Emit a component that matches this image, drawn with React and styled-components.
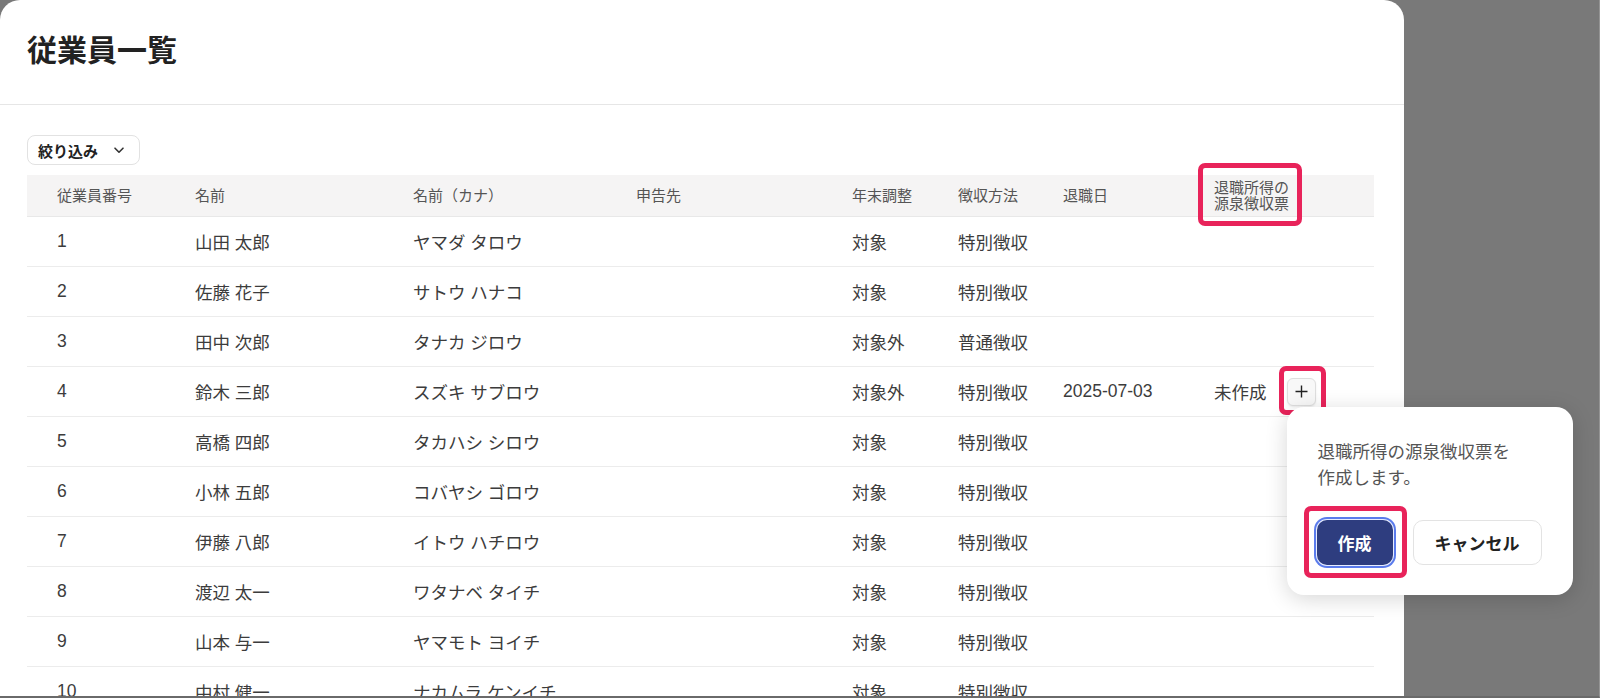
import React from "react";
import styled, { createGlobalStyle } from "styled-components";

const GlobalStyle = createGlobalStyle`
  html, body { margin: 0; padding: 0; }
  body {
    background: #797979;
    font-family: "Liberation Sans", "Noto Sans CJK JP", sans-serif;
    color: #3c3c3c;
    overflow: hidden;
  }
  * { box-sizing: border-box; }
`;

const Screen = styled.div`
  width: 1600px;
  height: 698px;
  overflow: hidden;
  background: #797979;
  border-right: 1px solid #949494;
  border-bottom: 2px solid #6a6a6a;
`;

const Panel = styled.main`
  width: 1404px;
  min-height: 696px;
  background: #fff;
  border-radius: 20px 20px 0 0;
  display: flex;
  flex-direction: column;
`;

const TitleBar = styled.header`
  height: 105px;
  flex-shrink: 0;
  border-bottom: 1px solid #e6e6e6;
  display: flex;
  align-items: center;
  padding: 0 0 8px 27px;
`;

const Title = styled.h1`
  margin: 0;
  font-family: "Noto Sans CJK JP", sans-serif;
  font-size: 30px;
  font-weight: 700;
  line-height: 1;
  color: #222;
`;

const Content = styled.section`
  display: flex;
  flex-direction: column;
  align-items: flex-start;
  padding: 30px 30px 0 27px;
`;

const FilterButton = styled.button`
  display: inline-flex;
  align-items: center;
  gap: 15px;
  width: 113px;
  height: 30px;
  padding: 0 0 0 10px;
  margin-bottom: 10px;
  border: 1px solid #e2e2e2;
  border-radius: 8px;
  background: #fff;
  font-family: "Noto Sans CJK JP", sans-serif;
  font-size: 15px;
  font-weight: 700;
  color: #222;
  cursor: pointer;
`;

const cols = "138px 218px 223px 216px 106px 105px 151px 190px";

const Table = styled.div`
  width: 1347px;
  display: flex;
  flex-direction: column;
`;

const HeaderRow = styled.div`
  display: grid;
  grid-template-columns: ${cols};
  height: 42px;
  flex-shrink: 0;
  align-items: center;
  background: #f5f4f4;
  border-bottom: 1px solid #e8e8e8;
`;

const HeadCell = styled.div`
  padding-left: 30px;
  font-size: 15px;
  line-height: 15.3px;
  color: #555;
`;

const Row = styled.div`
  display: grid;
  grid-template-columns: ${cols};
  height: 50px;
  flex-shrink: 0;
  align-items: center;
  border-bottom: 1px solid #ececec;
`;

const Cell = styled.div`
  display: flex;
  align-items: center;
  gap: 20px;
  padding-left: 30px;
  font-size: 17.5px;
  color: #3c3c3c;
  white-space: nowrap;
`;

const Marked = styled.span`
  position: relative;
  display: inline-block;
`;

const Highlight = styled.span`
  position: absolute;
  top: ${(p) => p.$top}px;
  right: ${(p) => p.$right}px;
  bottom: ${(p) => p.$bottom}px;
  left: ${(p) => p.$left}px;
  border: 5px solid #e8235a;
  border-radius: 7px;
  pointer-events: none;
  z-index: 5;
`;

const Anchor = styled.span`
  position: relative;
  display: inline-flex;
`;

const PlusButton = styled.button`
  width: 29px;
  height: 28px;
  padding: 0;
  display: flex;
  align-items: center;
  justify-content: center;
  border: 1px solid #dedede;
  border-radius: 6px;
  background: #f8f8f8;
  box-shadow: 0 1px 2px rgba(0, 0, 0, 0.08);
  cursor: pointer;
`;

const Popover = styled.div`
  position: absolute;
  top: 29px;
  left: 0;
  width: 286px;
  padding: 31px 31px 30px 30px;
  background: #fff;
  border-radius: 17px;
  box-shadow: 0 4px 22px rgba(0, 0, 0, 0.16);
  z-index: 10;
`;

const PopText = styled.p`
  margin: 0 0 29px 1px;
  font-family: "Noto Sans CJK JP", sans-serif;
  font-size: 17.5px;
  line-height: 26.5px;
  color: #555;
  white-space: nowrap;
`;

const Actions = styled.div`
  display: flex;
  gap: 20px;
  align-items: center;
`;

const ActionButton = styled.button`
  height: 45px;
  width: ${(p) => (p.$primary ? "76px" : "129px")};
  padding: 0;
  border-radius: 10px;
  font-family: "Noto Sans CJK JP", sans-serif;
  font-size: 17px;
  font-weight: 700;
  cursor: pointer;
  color: ${(p) => (p.$primary ? "#fff" : "#222")};
  background: ${(p) => (p.$primary ? "#2e3d7f" : "#fff")};
  border: ${(p) => (p.$primary ? "none" : "1px solid #e3e3e3")};
  box-shadow: ${(p) =>
    p.$primary ? "0 0 0 1px #e8eeff, 0 0 0 3px #5a7bec" : "none"};
`;

const Chevron = () => (
  <svg width="12" height="12" viewBox="0 0 12 12" fill="none">
    <path d="M2 4.2 L6 8.2 L10 4.2" stroke="#333" strokeWidth="1.6" strokeLinecap="round" strokeLinejoin="round" />
  </svg>
);

const PlusIcon = () => (
  <svg width="13" height="13" viewBox="0 0 13 13" fill="none">
    <path d="M6.5 0.5 V12.5 M0.5 6.5 H12.5" stroke="#222" strokeWidth="1.4" />
  </svg>
);

const rows = [
  ["1", "山田 太郎", "ヤマダ タロウ", "対象", "特別徴収"],
  ["2", "佐藤 花子", "サトウ ハナコ", "対象", "特別徴収"],
  ["3", "田中 次郎", "タナカ ジロウ", "対象外", "普通徴収"],
  ["4", "鈴木 三郎", "スズキ サブロウ", "対象外", "特別徴収", "2025-07-03", true],
  ["5", "高橋 四郎", "タカハシ シロウ", "対象", "特別徴収"],
  ["6", "小林 五郎", "コバヤシ ゴロウ", "対象", "特別徴収"],
  ["7", "伊藤 八郎", "イトウ ハチロウ", "対象", "特別徴収"],
  ["8", "渡辺 太一", "ワタナベ タイチ", "対象", "特別徴収"],
  ["9", "山本 与一", "ヤマモト ヨイチ", "対象", "特別徴収"],
  ["10", "中村 健一", "ナカムラ ケンイチ", "対象", "特別徴収"],
];

export default function App() {
  return (
    <Screen>
      <GlobalStyle />
      <Panel>
        <TitleBar>
          <Title>従業員一覧</Title>
        </TitleBar>
        <Content>
          <FilterButton>
            絞り込み
            <Chevron />
          </FilterButton>
          <Table>
            <HeaderRow>
              <HeadCell>従業員番号</HeadCell>
              <HeadCell>名前</HeadCell>
              <HeadCell>名前（カナ）</HeadCell>
              <HeadCell>申告先</HeadCell>
              <HeadCell>年末調整</HeadCell>
              <HeadCell>徴収方法</HeadCell>
              <HeadCell>退職日</HeadCell>
              <HeadCell>
                <Marked>
                  退職所得の
                  <br />
                  源泉徴収票
                  <Highlight $top={-17} $right={-13} $bottom={-15} $left={-16} />
                </Marked>
              </HeadCell>
            </HeaderRow>
            {rows.map(([no, name, kana, nenmatsu, method, retired, pending]) => (
              <Row key={no}>
                <Cell>{no}</Cell>
                <Cell>{name}</Cell>
                <Cell>{kana}</Cell>
                <Cell />
                <Cell>{nenmatsu}</Cell>
                <Cell>{method}</Cell>
                <Cell>{retired || ""}</Cell>
                <Cell>
                  {pending && (
                    <>
                      未作成
                      <Anchor>
                        <PlusButton aria-label="作成">
                          <PlusIcon />
                        </PlusButton>
                        <Highlight $top={-12} $right={-10} $bottom={-9} $left={-8} />
                        <Popover>
                          <PopText>
                            退職所得の源泉徴収票を
                            <br />
                            作成します。
                          </PopText>
                          <Actions>
                            <Anchor>
                              <ActionButton $primary>作成</ActionButton>
                              <Highlight $top={-14} $right={-14} $bottom={-13} $left={-13} />
                            </Anchor>
                            <ActionButton>キャンセル</ActionButton>
                          </Actions>
                        </Popover>
                      </Anchor>
                    </>
                  )}
                </Cell>
              </Row>
            ))}
          </Table>
        </Content>
      </Panel>
    </Screen>
  );
}
